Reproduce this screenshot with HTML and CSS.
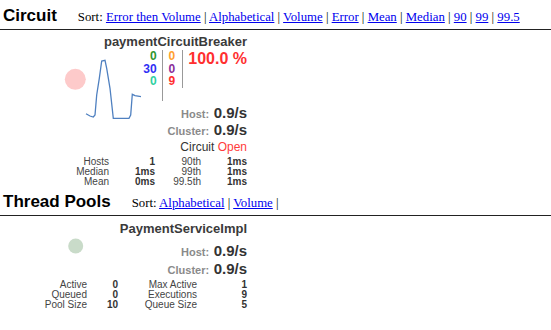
FILE: index.html
```html
<!DOCTYPE html>
<html lang="en">
  <head>
    <meta charset="UTF-8" />
    <title>Hystrix Stream</title>
    <link rel="stylesheet" href="styles.css">
  </head>
  <body>
    <div class="menubar">
      <div class="title">Circuit</div>
      <div class="sort">
        Sort: <a href="#">Error then Volume</a> |
        <a href="#">Alphabetical</a> |
        <a href="#">Volume</a> |
        <a href="#">Error</a> |
        <a href="#">Mean</a> |
        <a href="#">Median</a> |
        <a href="#">90</a> |
        <a href="#">99</a> |
        <a href="#">99.5</a>
      </div>
    </div>

    <div class="monitor circuit">
      <div class="name">paymentCircuitBreaker</div>
      <svg class="chart" width="135" height="80">
        <circle cx="75.3" cy="30.3" r="10.5" fill="#fdcaca" />
        <polyline fill="none" stroke="#4f80c0" stroke-width="1.3"
          points="86,64.7 90,67 93.3,68 95,66 96.7,46 99.3,29.3 101.7,12 105,11.3 106.7,19.3 110,39.3 113.3,69.3 129,69.3 130.7,66 132.3,45.3 135,46.7 141,47.7" />
      </svg>
      <div class="counters">
        <div class="cell first">
          <div class="success">0</div>
          <div class="shortCircuited">30</div>
          <div class="badRequest">0</div>
        </div>
        <div class="cell second">
          <div class="timeout">0</div>
          <div class="rejected">0</div>
          <div class="failure">9</div>
        </div>
        <div class="cell errorPercentage">100.0 %</div>
      </div>
      <div class="rate host"><span class="label">Host:</span> <span class="value">0.9/s</span></div>
      <div class="rate cluster"><span class="label">Cluster:</span> <span class="value">0.9/s</span></div>
      <div class="status">Circuit <span class="open">Open</span></div>
      <div class="table">
        <div class="header">Hosts</div><div class="data">1</div>
        <div class="header">90th</div><div class="data">1ms</div>
        <div class="header">Median</div><div class="data">1ms</div>
        <div class="header">99th</div><div class="data">1ms</div>
        <div class="header">Mean</div><div class="data">0ms</div>
        <div class="header">99.5th</div><div class="data">1ms</div>
      </div>
    </div>

    <div class="menubar pools">
      <div class="title">Thread Pools</div>
      <div class="sort">
        Sort: <a href="#">Alphabetical</a> |
        <a href="#">Volume</a> |
      </div>
    </div>

    <div class="monitor pool">
      <div class="name">PaymentServiceImpl</div>
      <svg class="chart" width="135" height="32">
        <circle cx="75.7" cy="10" r="7.5" fill="#c9dbc9" />
      </svg>
      <div class="rate host"><span class="label">Host:</span> <span class="value">0.9/s</span></div>
      <div class="rate cluster"><span class="label">Cluster:</span> <span class="value">0.9/s</span></div>
      <div class="table">
        <div class="header">Active</div><div class="data">0</div>
        <div class="header">Max Active</div><div class="data">1</div>
        <div class="header">Queued</div><div class="data">0</div>
        <div class="header">Executions</div><div class="data">9</div>
        <div class="header">Pool Size</div><div class="data">10</div>
        <div class="header">Queue Size</div><div class="data">5</div>
      </div>
    </div>
  </body>
</html>
```

FILE: styles.css
```css
* {
  box-sizing: border-box;
}
body {
  margin: 0;
  background-color: white;
  font-family: "Liberation Sans", Arial, Helvetica, sans-serif;
  color: #333;
}
.menubar {
  display: flex;
  align-items: baseline;
  gap: 21px;
  padding: 6px 3px 2px;
  line-height: 19px;
  border-bottom: 1px solid #222;
}
.menubar.pools {
  padding-top: 5px;
}
.title {
  font-size: 17px;
  font-weight: bold;
  color: black;
}
.sort {
  font-family: "Liberation Serif", "Times New Roman", serif;
  font-size: 12.8px;
  color: black;
}
.sort a {
  color: #0000ee;
}
.monitor {
  width: 247px;
  display: grid;
  grid-template-columns: 135px 112px;
}
.name {
  grid-column: 1 / 3;
  margin-top: 4px;
  text-align: right;
  font-size: 13px;
  line-height: 15px;
  font-weight: bold;
  color: #3a3a3a;
}
.chart {
  grid-column: 1;
  grid-row: 2 / 5;
  overflow: visible;
}
.counters {
  grid-column: 2;
  justify-self: end;
  display: flex;
  margin-top: 1px;
  font-weight: bold;
}
.cell {
  font-size: 12px;
  line-height: 12.5px;
  text-align: right;
}
.cell.first {
  padding: 0 5px 13px 0;
  border-right: 1px solid #999;
}
.cell.second {
  padding: 0 7px 0 6px;
  border-right: 1px solid #999;
  align-self: start;
}
.errorPercentage {
  padding-left: 5px;
  font-size: 16px;
  line-height: 17px;
  color: #ff2f2f;
}
.success { color: #2f962f; }
.shortCircuited { color: #2f2ff5; }
.badRequest { color: #2fd0a0; }
.timeout { color: #ff9f2f; }
.rejected { color: #8a2d9a; }
.failure { color: #ff2f2f; }
.rate {
  grid-column: 2;
  justify-self: end;
  line-height: 15px;
  white-space: nowrap;
}
.rate.host {
  margin-top: 4px;
}
.rate .label {
  font-size: 11px;
  font-weight: bold;
  color: #8a8a8a;
}
.rate .value {
  font-size: 15px;
  font-weight: bold;
  color: #333;
}
.status {
  grid-column: 2;
  justify-self: end;
  margin-top: 1px;
  font-size: 12px;
  line-height: 14px;
  color: #333;
}
.open {
  color: #ff3b3b;
}
.table {
  grid-column: 1 / 3;
  justify-self: end;
  display: grid;
  grid-template-columns: 46px 46px 46px 46px;
  margin-top: 3px;
  font-size: 10px;
  line-height: 10px;
  text-align: right;
}
.header {
  color: #444;
}
.data {
  font-weight: bold;
  color: #333;
}
.pool .name {
  margin-top: 5px;
}
.pool .chart {
  grid-row: 2 / 4;
}
.pool .rate.host {
  margin-top: 7px;
}
.pool .rate.cluster {
  margin-top: 1px;
}
.pool .table {
  margin-top: 2px;
  grid-template-columns: 47px 31px 79px 50px;
}
```
